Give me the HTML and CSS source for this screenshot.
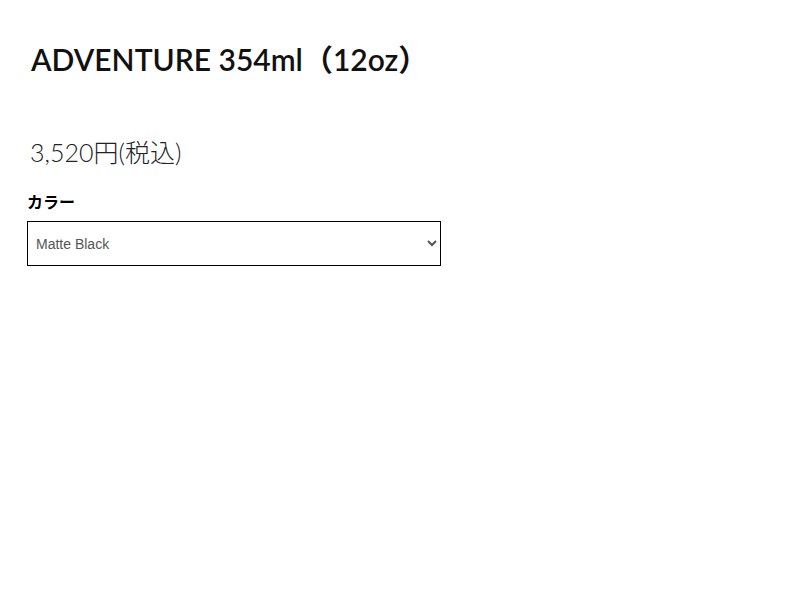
FILE: index.html
```html
<!DOCTYPE html>
<html lang="ja">
<head>
<meta charset="utf-8">
<link rel="stylesheet" href="styles.css">
</head>
<body>
<main class="product">
  <h1 class="title">ADVENTURE 354ml（12oz）</h1>
  <p class="price">3,520円(税込)</p>
  <div class="option">
    <label class="label" for="color">カラー</label>
    <select id="color" class="select">
      <option>Matte Black</option>
    </select>
  </div>
</main>
</body>
</html>
```

FILE: styles.css
```css
html, body {
  margin: 0;
  padding: 0;
  background: #fff;
}
.product {
  padding: 40px 27px 0;
  font-family: "Lato", "Noto Sans CJK JP", sans-serif;
  color: #111;
}
.title {
  margin: 0 0 0 4px;
  font-family: "Lato", "Noto Sans CJK JP", sans-serif;
  font-size: 30px;
  font-weight: 600;
  line-height: 38px;
  letter-spacing: 0;
  color: #111;
}
.price {
  margin: 58px 0 0 3px;
  font-size: 25px;
  font-weight: 300;
  line-height: 32px;
  color: #222;
}
.option {
  margin-top: 23px;
  display: flex;
  flex-direction: column;
  gap: 10px;
}
.label {
  font-family: "Noto Sans CJK JP", sans-serif;
  font-size: 16px;
  font-weight: 700;
  line-height: 20px;
  color: #000;
}
.select {
  width: 414px;
  height: 45px;
  border: 1px solid #000;
  border-radius: 0;
  padding: 0 4px;
  font-family: "Liberation Sans", Arial, sans-serif;
  font-size: 14px;
  color: #555;
  background: #fff;
}
```
